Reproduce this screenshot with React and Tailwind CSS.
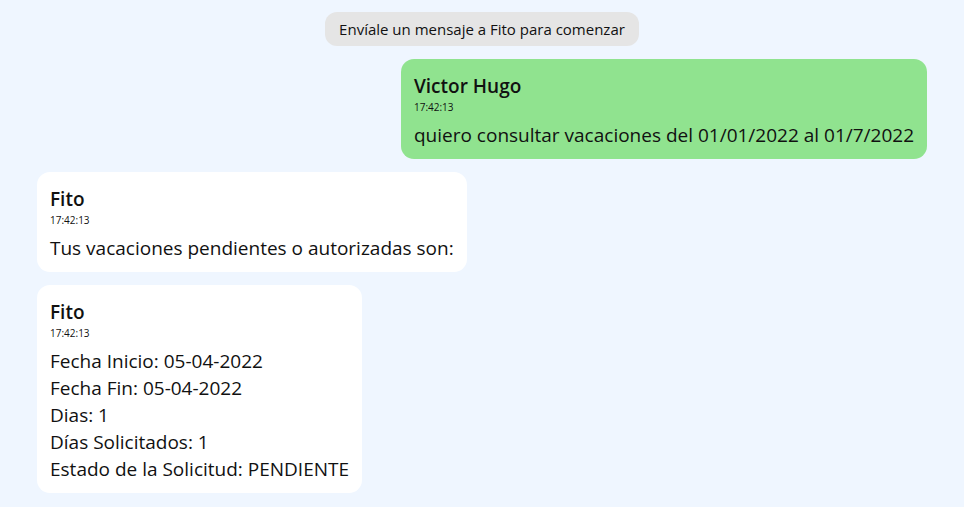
const MESSAGES = [
    { id: 1, mine: true, author: 'Victor Hugo', time: '17:42:13', lines: ['quiero consultar vacaciones del 01/01/2022 al 01/7/2022'] },
    { id: 2, mine: false, author: 'Fito', time: '17:42:13', lines: ['Tus vacaciones pendientes o autorizadas son:'] },
    {
        id: 3, mine: false, author: 'Fito', time: '17:42:13', lines: [
            'Fecha Inicio: 05-04-2022',
            'Fecha Fin: 05-04-2022',
            'Dias: 1',
            'Días Solicitados: 1',
            'Estado de la Solicitud: PENDIENTE',
        ]
    },
];

function Bubble({ msg }) {
    return (
        <div className={`rounded-[13px] px-[13px] pt-[14px] pb-[10px] text-[#111] ${msg.mine ? 'self-end bg-[#90e38f]' : 'self-start bg-white'}`}>
            <p className="text-[19px] leading-[27px] font-semibold">{msg.author}</p>
            <p className="text-[10px] leading-[14px]">{msg.time}</p>
            <div className="mt-[8px]">
                {msg.lines.map((l) => (
                    <p key={l} className="text-[19px] leading-[27px]">{l}</p>
                ))}
            </div>
        </div>
    );
}

export default function App() {
    return (
        <div className="min-h-screen bg-[#eff6ff] flex flex-col gap-[13px] px-[37px] pt-[12px] pb-4"
            style={{ fontFamily: "'Segoe UI', 'Open Sans', 'Noto Sans', sans-serif" }}>
            <div className="self-center bg-[#e5e5e5] rounded-[12px] px-[14px] py-[7px] text-[15px] leading-[20px] text-[#111]">
                Envíale un mensaje a Fito para comenzar
            </div>
            {MESSAGES.map((m) => <Bubble key={m.id} msg={m} />)}
        </div>
    );
}
